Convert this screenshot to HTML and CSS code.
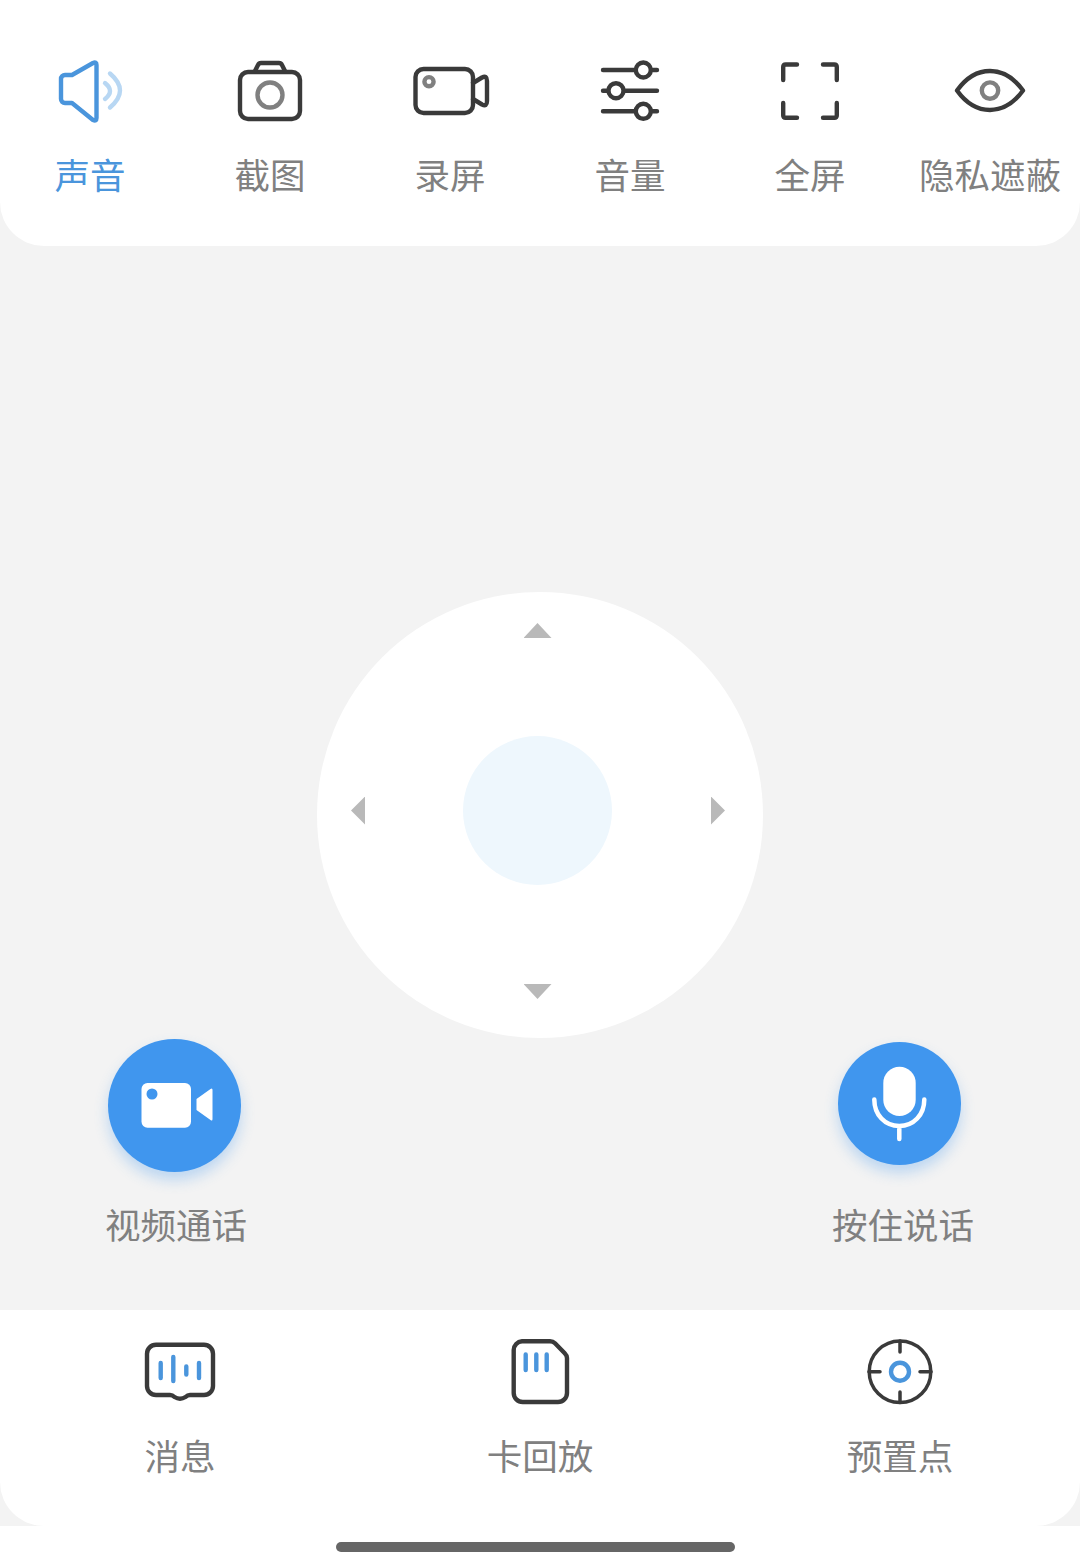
FILE: index.html
```html
<!DOCTYPE html>
<html lang="zh">
<head>
  <meta charset="UTF-8">
  <title>设备预览</title>
  <link rel="stylesheet" href="styles.css">
</head>
<body>
  <div class="page">
    <!-- top tools -->
    <div class="tools">
      <div class="tool active">
        <svg class="ico" viewBox="0 0 80 80">
          <path class="s-blue" d="M11 29a4 4 0 0 1 4-4h7L43 13q3.500-1.500 3.500 2V68q0 3.500-3.500 2L22 53h-7a4 4 0 0 1-4-4z"/>
          <path class="s-pale" d="M55 33Q65 41 55 49M60 23.500Q80 40.500 60 57.500"/>
        </svg>
        <span class="label">声音</span>
      </div>
      <div class="tool">
        <svg class="ico" viewBox="0 0 80 80">
          <rect class="s-dark" x="10" y="22" width="60" height="47" rx="8"/>
          <path class="s-dark" d="M25 21l3-6q1-2 3-2H49q2 0 3 2l3 6"/>
          <circle class="s-grey" cx="40" cy="45" r="12.500"/>
        </svg>
        <span class="label">截图</span>
      </div>
      <div class="tool">
        <svg class="ico" viewBox="0 0 80 80">
          <rect class="s-dark" x="5.500" y="19" width="57.500" height="44" rx="8"/>
          <path class="s-dark" d="M63 33L72 27.500Q77 25 77 31V51Q77 57 72 54.500L63 49"/>
          <circle class="s-grey" cx="19" cy="31.700" r="4.600"/>
        </svg>
        <span class="label">录屏</span>
      </div>
      <div class="tool">
        <svg class="ico" viewBox="0 0 80 80">
          <path class="s-dark" d="M13 20H67M13 40.700H67M13 61.300H67"/>
          <circle class="s-dark knob" cx="53.300" cy="20" r="7.500"/>
          <circle class="s-dark knob" cx="26" cy="40.700" r="7.500"/>
          <circle class="s-dark knob" cx="53.300" cy="61.300" r="7.500"/>
        </svg>
        <span class="label">音量</span>
      </div>
      <div class="tool">
        <svg class="ico" viewBox="0 0 80 80">
          <path class="s-dark" d="M13.200 30V17q0-2.500 2.500-2.500H27M53 14.500H64.300q2.500 0 2.500 2.500V30M66.800 53V65.300q0 2.500-2.500 2.500H53M27 67.800H15.700q-2.500 0-2.500-2.500V53"/>
        </svg>
        <span class="label">全屏</span>
      </div>
      <div class="tool">
        <svg class="ico" viewBox="0 0 80 80">
          <path class="s-dark" d="M7 40.500C16 28 28 21 40 21C52 21 64 28 73 40.500C64 53 52 60 40 60C28 60 16 53 7 40.500z"/>
          <circle class="s-grey" cx="40" cy="40.600" r="8.200"/>
        </svg>
        <span class="label">隐私遮蔽</span>
      </div>
    </div>

    <div class="stage">
      <div class="pad">
        <span class="arrow up"></span>
        <span class="arrow left"></span>
        <span class="pad-center"></span>
        <span class="arrow right"></span>
        <span class="arrow down"></span>
      </div>

      <div class="actions">
        <div class="action call">
          <div class="round">
            <svg viewBox="0 0 133 133">
              <rect class="f-white" x="33.500" y="44" width="49.500" height="44.700" rx="6"/>
              <circle class="f-blue" cx="44" cy="55" r="5.500"/>
              <path class="f-white" d="M88.500 60L102.500 50Q104.500 48.500 104.500 51V80Q104.500 82.500 102.500 81L88.500 71z"/>
            </svg>
          </div>
          <span class="label">视频通话</span>
        </div>
        <div class="action talk">
          <div class="round">
            <svg viewBox="0 0 123 123">
              <rect class="f-white" x="45.300" y="24.700" width="32.400" height="49.300" rx="16.200"/>
              <path class="s-white" d="M36.300 57.500C36.300 73 47 84 61.300 84C75.600 84 86.300 73 86.300 57.500M61.300 84V97"/>
            </svg>
          </div>
          <span class="label">按住说话</span>
        </div>
      </div>
    </div>

    <!-- bottom tabs -->
    <div class="tabs">
      <div class="tab">
        <svg class="ico" viewBox="0 0 80 80">
          <path class="s-dark" d="M16 14.700H64a9 9 0 0 1 9 9V56a9 9 0 0 1-9 9H50q-2.500 0-4.500 2q-5.500 3.500-11 0q-2-2-4.500-2H16a9 9 0 0 1-9-9V23.700a9 9 0 0 1 9-9z"/>
          <path class="s-blue" d="M20.700 33V48M33.300 27V51M46.300 36.500V44.500M59 33V48"/>
        </svg>
        <span class="label">消息</span>
      </div>
      <div class="tab">
        <svg class="ico" viewBox="0 0 80 80">
          <path class="s-dark" d="M22 11.300H50q3 0 5 2L64.500 23q2.500 2.500 2.500 5V63a9 9 0 0 1-9 9H22.700a9 9 0 0 1-9-9V20a9 9 0 0 1 8.300-8.700z"/>
          <path class="s-blue" d="M25.700 24.500V40M36.300 24.500V40M46.700 24.500V40"/>
        </svg>
        <span class="label">卡回放</span>
      </div>
      <div class="tab">
        <svg class="ico" viewBox="0 0 80 80">
          <circle class="s-dark thin" cx="40" cy="41.700" r="30.800"/>
          <path class="s-dark thin" d="M40 11V22M40 62V72.500M9 41.700H20M60 41.700H71"/>
          <circle class="s-blue" cx="40" cy="41.700" r="9"/>
        </svg>
        <span class="label">预置点</span>
      </div>
    </div>

    <div class="home-area"><span class="home-bar"></span></div>
  </div>
</body>
</html>
```

FILE: styles.css
```css
* { box-sizing: border-box; }
body { margin: 0; background: #f3f3f3; font-family: "Noto Sans CJK SC", "Noto Sans", sans-serif; }
.page { width: 1080px; height: 1568px; overflow: hidden; display: flex; flex-direction: column; }

.label { display: block; font-size: 35.5px; line-height: 40px; color: #808080; white-space: nowrap; text-align: center; }
.ico { display: block; width: 80px; height: 80px; }

/* svg paint */
.s-dark, .s-grey, .s-blue, .s-pale, .s-white { fill: none; stroke-width: 4.4; stroke-linecap: round; stroke-linejoin: round; }
.s-dark { stroke: #3a3a3a; }
.s-grey { stroke: #808080; }
.s-blue { stroke: #4a95dc; }
.s-pale { stroke: #b8d7f3; }
.s-white { stroke: #fff; stroke-width: 4.5; }
.knob { fill: #fff; }
.thin { stroke-width: 3.5; }
.f-white { fill: #fff; }
.f-blue { fill: #4096ee; }

.tools { height: 246px; flex: none; padding-top: 50px; display: flex; background: #fff; border-radius: 0 0 44px 44px; }
.tool { width: 180px; display: flex; flex-direction: column; align-items: center; gap: 24px; }
.tool.active .label { color: #4a95dc; }

.stage { height: 1064px; flex: none; padding-top: 346px; }

.pad { width: 446px; height: 446px; margin-left: 317px; background: #fff; border-radius: 50%; display: grid; grid-template-columns: 146px 149px 151px; grid-template-rows: 144px 149px 153px; }
.pad-center { grid-column: 2; grid-row: 2; background: #eef7fd; border-radius: 50%; }
.arrow { background: #b9b9b9; }
.arrow.up { grid-column: 2; grid-row: 1; justify-self: center; margin-top: 31px; width: 28px; height: 15px; clip-path: polygon(50% 0, 100% 100%, 0 100%); }
.arrow.down { grid-column: 2; grid-row: 3; justify-self: center; margin-top: 99px; width: 28px; height: 15px; clip-path: polygon(0 0, 100% 0, 50% 100%); }
.arrow.left { grid-column: 1; grid-row: 2; align-self: center; margin-left: 34px; width: 14px; height: 28px; clip-path: polygon(100% 0, 100% 100%, 0 50%); }
.arrow.right { grid-column: 3; grid-row: 2; align-self: center; margin-left: 99px; width: 14px; height: 28px; clip-path: polygon(0 0, 100% 50%, 0 100%); }

.actions { display: flex; justify-content: space-between; padding: 0 77px 0 76px; }
.action { width: 200px; display: flex; flex-direction: column; align-items: center; }
.round { background: #4096ee; border-radius: 50%; box-shadow: 0 8px 14px rgba(64, 150, 238, .3); }
.round svg { display: block; width: 100%; height: 100%; }
.call .round { width: 133px; height: 133px; margin: 1px 4px 32px 0; }
.talk .round { width: 123px; height: 123px; margin: 4px 8px 39px 0; }

.tabs { height: 216px; flex: none; padding-top: 20px; display: flex; background: #fff; border-radius: 0 0 44px 44px; }
.tab { width: 360px; display: flex; flex-direction: column; align-items: center; gap: 25px; }

.home-area { flex: 1; background: #fff; display: flex; justify-content: center; padding: 16px 10px 0 0; }
.home-bar { width: 399px; height: 10px; background: #666; border-radius: 5px; }
```
